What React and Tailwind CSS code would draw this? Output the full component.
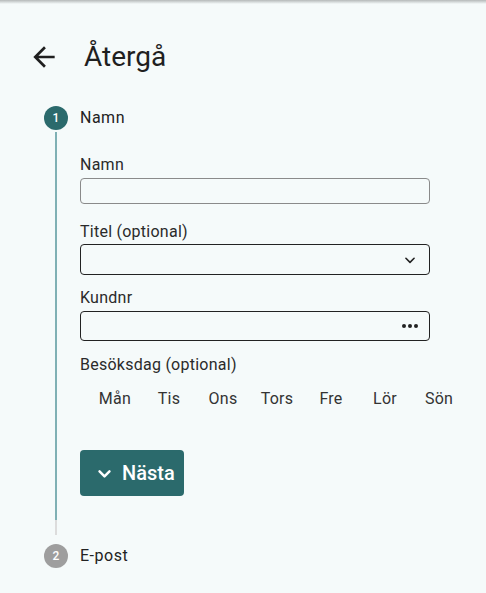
import React from 'react';

const days = ['Mån', 'Tis', 'Ons', 'Tors', 'Fre', 'Lör', 'Sön'];

const StepBadge = ({ n, active }) => (
  <div
    className={`w-6 h-6 rounded-full flex items-center justify-center text-[12px] font-medium text-white ${
      active ? 'bg-[#2b6a6c]' : 'bg-[#9e9e9e]'
    }`}
  >
    {n}
  </div>
);

const Label = ({ children, className = '' }) => (
  <div className={`text-[16px] leading-6 tracking-[0.25px] text-[#2a2a2a] ${className}`}>{children}</div>
);

const App = () => {
  return (
    <div
      className="w-full min-h-screen bg-[#f5fafa] text-[#1f1f1f]"
      style={{ fontFamily: 'Roboto, "Noto Sans", sans-serif' }}
    >
      {/* top shadow of app bar */}
      <div className="h-[4px] bg-gradient-to-b from-[#b5b9b9] to-[#f5fafa]" />

      {/* Header */}
      <div className="flex items-center h-[32px] mt-[37px] pl-[28px]">
        <svg width="32" height="32" viewBox="0 0 24 24" className="fill-[#1f1f1f]">
          <path d="M20 11H7.83l5.59-5.59L12 4l-8 8 8 8 1.41-1.41L7.83 13H20v-2z" />
        </svg>
        <span className="ml-[24px] text-[28px] leading-8 text-[#1f1f1f]">Återgå</span>
      </div>

      <div className="pl-[44px] mt-[33px]">
        {/* Step 1 */}
        <div className="flex items-center h-6">
          <StepBadge n={1} active />
          <span className="ml-3 text-[16px] tracking-[0.5px] text-[#222]">Namn</span>
        </div>

        <div className="ml-[11px] mt-[2px] border-l-2 border-[#7fb0b4] pl-[23px] pt-[21px] pb-[24px]">
          <Label>Namn</Label>
          <div className="mt-px w-[350px] h-[26px] rounded-[4px] border-[1.5px] border-[#8a8a8a]" />

          <Label className="mt-4">Titel (optional)</Label>
          <div className="w-[350px] h-[31px] rounded-[4px] border border-[#222] flex items-center justify-end pr-[12px]">
            <svg width="14" height="14" viewBox="0 0 24 24" fill="none" stroke="#222" strokeWidth="2.75" strokeLinecap="round" strokeLinejoin="round">
              <path d="M5 9l7 7 7-7" />
            </svg>
          </div>

          <Label className="mt-[11px]">Kundnr</Label>
          <div className="mt-px w-[350px] h-[30px] rounded-[4px] border border-[#222] flex items-center justify-end pr-[11px] gap-[2px]">
            <span className="w-[4px] h-[4px] rounded-full bg-[#222]" />
            <span className="w-[4px] h-[4px] rounded-full bg-[#222]" />
            <span className="w-[4px] h-[4px] rounded-full bg-[#222]" />
          </div>

          <Label className="mt-[12px]">Besöksdag (optional)</Label>
          <div className="mt-[10px] ml-[8px] grid grid-cols-[repeat(7,54px)]">
            {days.map((d) => (
              <div key={d} className="text-center text-[16px] leading-6 tracking-[0.25px] text-[#333]">
                {d}
              </div>
            ))}
          </div>

          <button className="mt-[39px] w-[104px] h-[46px] rounded-[4px] bg-[#2b6a6c] flex items-center pl-[16px] text-white">
            <svg width="17" height="17" viewBox="0 0 24 24" fill="none" stroke="#fff" strokeWidth="3.5" strokeLinecap="round" strokeLinejoin="round">
              <path d="M5 9l7 7 7-7" />
            </svg>
            <span className="ml-[9px] text-[20px] font-medium leading-none">Nästa</span>
          </button>
        </div>

        <div className="ml-[11px] w-[2px] h-[15px] bg-[#dcdcdc]" />

        {/* Step 2 */}
        <div className="flex items-center h-6 mt-[9px]">
          <StepBadge n={2} />
          <span className="ml-3 text-[16px] tracking-[0.5px] text-[#222]">E-post</span>
        </div>
      </div>
    </div>
  );
};

export default App;
